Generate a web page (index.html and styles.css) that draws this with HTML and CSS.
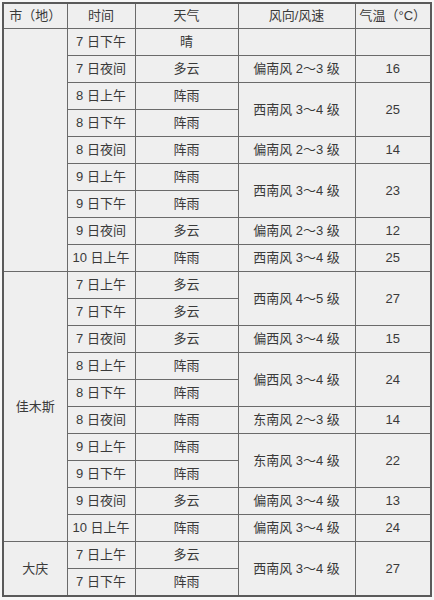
FILE: index.html
```html
<!DOCTYPE html>
<html lang="zh-CN">
<head>
<meta charset="utf-8">
<link rel="stylesheet" href="styles.css">
</head>
<body>
<table class="wx">
  <colgroup>
    <col class="c-city"><col class="c-time"><col class="c-sky"><col class="c-wind"><col class="c-temp">
  </colgroup>
  <thead>
    <tr class="head"><th>市（地）</th><th>时间</th><th>天气</th><th>风向/风速</th><th>气温（°C）</th></tr>
  </thead>
  <tbody>
    <tr><td rowspan="9"></td><td>7 日下午</td><td>晴</td><td></td><td></td></tr>
    <tr><td>7 日夜间</td><td>多云</td><td>偏南风 2～3 级</td><td>16</td></tr>
    <tr><td>8 日上午</td><td>阵雨</td><td rowspan="2">西南风 3～4 级</td><td rowspan="2">25</td></tr>
    <tr><td>8 日下午</td><td>阵雨</td></tr>
    <tr><td>8 日夜间</td><td>阵雨</td><td>偏南风 2～3 级</td><td>14</td></tr>
    <tr><td>9 日上午</td><td>阵雨</td><td rowspan="2">西南风 3～4 级</td><td rowspan="2">23</td></tr>
    <tr><td>9 日下午</td><td>阵雨</td></tr>
    <tr><td>9 日夜间</td><td>多云</td><td>偏南风 2～3 级</td><td>12</td></tr>
    <tr><td>10 日上午</td><td>阵雨</td><td>西南风 3～4 级</td><td>25</td></tr>

    <tr><td rowspan="10">佳木斯</td><td>7 日上午</td><td>多云</td><td rowspan="2">西南风 4～5 级</td><td rowspan="2">27</td></tr>
    <tr><td>7 日下午</td><td>多云</td></tr>
    <tr><td>7 日夜间</td><td>多云</td><td>偏西风 3～4 级</td><td>15</td></tr>
    <tr><td>8 日上午</td><td>阵雨</td><td rowspan="2">偏西风 3～4 级</td><td rowspan="2">24</td></tr>
    <tr><td>8 日下午</td><td>阵雨</td></tr>
    <tr><td>8 日夜间</td><td>阵雨</td><td>东南风 2～3 级</td><td>14</td></tr>
    <tr><td>9 日上午</td><td>阵雨</td><td rowspan="2">东南风 3～4 级</td><td rowspan="2">22</td></tr>
    <tr><td>9 日下午</td><td>阵雨</td></tr>
    <tr><td>9 日夜间</td><td>多云</td><td>偏南风 3～4 级</td><td>13</td></tr>
    <tr><td>10 日上午</td><td>阵雨</td><td>偏南风 3～4 级</td><td>24</td></tr>

    <tr><td rowspan="2">大庆</td><td>7 日上午</td><td>多云</td><td rowspan="2">西南风 3～4 级</td><td rowspan="2">27</td></tr>
    <tr><td>7 日下午</td><td>阵雨</td></tr>
  </tbody>
</table>
</body>
</html>
```
FILE: styles.css
```css
html, body {
  margin: 0;
  padding: 0;
  background: #f7f7f7;
}
body {
  padding: 2px 0 0 2px;
  font-family: "Liberation Sans", "Noto Sans CJK SC", sans-serif;
  font-size: 13px;
  color: #3a3a3a;
}
.wx {
  border-collapse: collapse;
  table-layout: fixed;
  width: 428px;
  background: #efefef;
  border: 2px solid #5a5a5a;
}
.c-city { width: 64px; }
.c-time { width: 68px; }
.c-sky { width: 103px; }
.c-wind { width: 117px; }
.c-temp { width: 76px; }
.wx th, .wx td {
  border: 1px solid #6a6a6a;
  padding: 0;
  text-align: center;
  vertical-align: middle;
  font-weight: normal;
  line-height: 16px;
  white-space: nowrap;
}
.wx td { height: 26px; }
.wx th { height: 24px; }
```
